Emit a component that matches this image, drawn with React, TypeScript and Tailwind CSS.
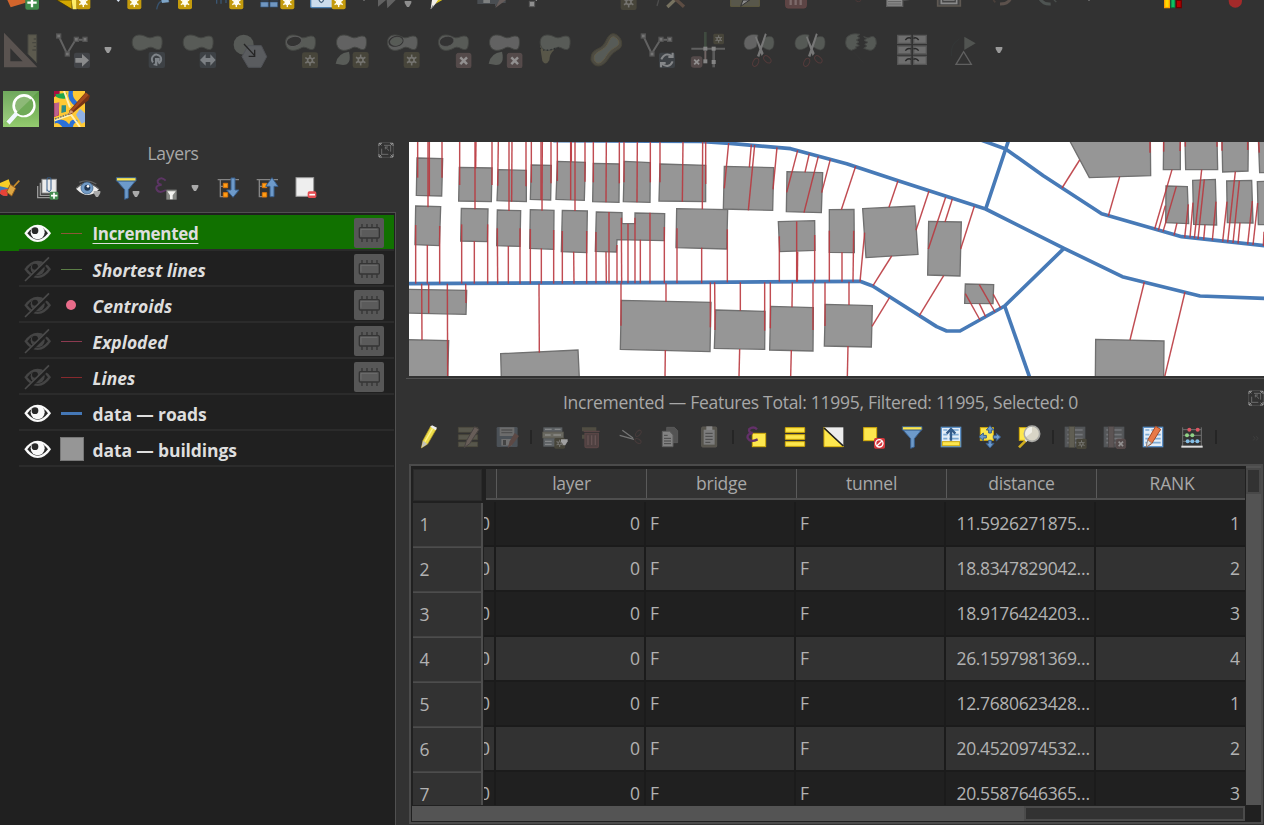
import React from "react";

type Kids = { children?: React.ReactNode };

/* One toolbar slot. Icons are drawn on a grid of three units per pixel. */
function Slot({ x, w, o = 0, top, h, children }: Kids & { x: number; w: number; o?: number; top: number; h: number }) {
  return (
    <svg className="block shrink-0" width={w} height={h} viewBox={`${(x - o) * 3} ${top} ${w * 3} ${h * 3}`}>
      {children}
    </svg>
  );
}

function Gear({ x, y, s = 46, on = false }: { x: number; y: number; s?: number; on?: boolean }) {
  const c = s / 2;
  const r = s * 0.34;
  const col = on ? "#fffdf0" : "#757470";
  return (
    <g transform={`translate(${x} ${y})`}>
      <rect width={s} height={s} rx={s * 0.14} fill={on ? "#c49b0c" : "#47453a"} />
      <g stroke={col} strokeWidth={s * 0.1} fill="none">
        {[0, 60, 120].map((a) => (
          <line key={a} x1={c} y1={c - r} x2={c} y2={c + r} transform={`rotate(${a} ${c} ${c})`} />
        ))}
        <circle cx={c} cy={c} r={s * 0.15} fill={on ? "#fffdf0" : "#47453a"} />
      </g>
    </g>
  );
}

function Cross({ x, y, s = 44 }: { x: number; y: number; s?: number }) {
  return (
    <g transform={`translate(${x} ${y})`}>
      <rect width={s} height={s} rx={6} fill="#544a4a" stroke="#5e5050" strokeWidth={2} />
      <path d={`M${s * 0.27} ${s * 0.27}L${s * 0.73} ${s * 0.73}M${s * 0.73} ${s * 0.27}L${s * 0.27} ${s * 0.73}`} stroke="#929090" strokeWidth={s * 0.17} />
    </g>
  );
}

function Blob({ x = 0, y = 0, fill = "#585b57" }: { x?: number; y?: number; fill?: string }) {
  return (
    <path
      transform={`translate(${x} ${y})`}
      d="M3 32C0 12 12 3 26 4C44 5 48 16 64 11C76 6 88 5 91 14C94 24 92 42 87 46C74 53 66 36 51 42C34 52 9 57 3 32Z"
      fill={fill}
      stroke="#444643"
      strokeWidth={3}
    />
  );
}

const Drop = ({ x, y, c = "#aaaaaa" }: { x: number; y: number; c?: string }) => (
  <path d={`M${x - 10} ${y - 9}h20v6l-7 12h-6l-7-12z`} fill={c} />
);

function TopStrip() {
  return (
    <div className="flex h-2.5 overflow-hidden">
      <Slot x={0} w={48} top={0} h={10}>
        <path d="M22 0h55v8L32 22z" fill="#d3652c" />
        <rect x={76} y={-12} width={41} height={41} rx={6} fill="#3f8a4b" />
        <path d="M96 -6V22M82 8H110" stroke="#fff" strokeWidth={7} />
      </Slot>
      <Slot x={48} w={51} top={0} h={10}>
        <path d="M170 0h46v28z" fill="#d4a800" stroke="#3c3000" strokeWidth={2} />
        <path d="M215 0h15v28h-12z" fill="#ffed68" />
        <Gear x={229} y={-14} s={42} on />
      </Slot>
      <Slot x={99} w={51} top={0} h={10}>
        <path d="M348 -2h14l-7 8z" fill="#d8e4f2" />
        <Gear x={382} y={-14} s={42} on />
      </Slot>
      <Slot x={150} w={51} top={0} h={10}>
        <path d="M470 28C475 2 484 0 508 5" fill="none" stroke="#38536e" strokeWidth={4} />
        <path d="M484 0h22v7l-20 2z" fill="#7ea5c8" />
        <Gear x={534} y={-14} s={42} on />
      </Slot>
      <Slot x={201} w={51} top={0} h={10}>
        <path d="M650 0v11M663 0v11M678 0v9" stroke="#3a5672" strokeWidth={4} />
        <Gear x={688} y={-14} s={42} on />
      </Slot>
      <Slot x={252} w={51} top={0} h={10}>
        <path d="M782 -10h24v10h-24zM811 -10h24v10h-24zM782 6h23v15h-23zM810 6h23v15h-23z" fill="#7097c2" stroke="#35567c" strokeWidth={2} />
        <Gear x={841} y={-14} s={42} on />
      </Slot>
      <Slot x={303} w={54} top={0} h={10}>
        <rect x={932} y={-20} width={70} height={43} rx={4} fill="#cbdcec" stroke="#4d7faf" strokeWidth={4} />
        <path d="M957 0q7 15 14 0" fill="#e8f2fa" stroke="#476480" strokeWidth={4} />
        <Gear x={995} y={-14} s={42} on />
      </Slot>
      <Slot x={357} w={67} top={0} h={10}>
        <rect x={1090} width={4} height={3} fill="#777" />
        <path d="M1134 0h24l-24 20zM1160 0h27l-25 25z" fill="#626262" />
        <Drop x={1224} y={12} c="#8d8d8d" />
      </Slot>
      <Slot x={424} w={46} o={420} top={0} h={10}>
        <path d="M36 0h21L32 28z" fill="#f2efe7" />
        <path d="M54 0h13L47 11z" fill="#d9c21b" />
        <path d="M38 15L31 28l10-9z" fill="#888" />
      </Slot>
      <Slot x={470} w={50} o={420} top={0} h={10}>
        <path d="M172 0h85v9h-22l-10 12V12h-53z" fill="#4a4e52" />
        <path d="M190 0h20v9h-20z" fill="#7e8080" />
        <path d="M238 0h20l-32 24z" fill="#665c5a" />
      </Slot>
      <Slot x={520} w={78} o={420} top={0} h={10}>
        <rect x={328} y={4} width={16} height={16} fill="#8e8e8e" stroke="#555" strokeWidth={3} />
        <path d="M347 0h4v3h-4z" fill="#888" />
      </Slot>
      <Slot x={598} w={50} o={420} top={0} h={10}>
        <Gear x={602} y={-18} s={48} />
      </Slot>
      <Slot x={648} w={70} o={420} top={0} h={10}>
        <path d="M711 18l5-18" stroke="#4d4d4d" strokeWidth={4} />
        <path d="M742 21L768 -4" stroke="#777260" strokeWidth={10} />
        <path d="M765 -4L792 20" stroke="#5d4d43" strokeWidth={10} />
      </Slot>
      <Slot x={718} w={60} o={420} top={0} h={10}>
        <path d="M932 -2h86v21h-86z" fill="#58574b" stroke="#5f5c42" strokeWidth={3} />
        <path d="M969 0h20L962 19z" fill="#8a8a8a" stroke="#333" strokeWidth={3} />
      </Slot>
      <Slot x={778} w={62} o={420} top={0} h={10}>
        <rect x={1097} y={-20} width={62} height={44} rx={7} fill="#5c4545" stroke="#654646" strokeWidth={3} />
        <path d="M1112 0v15M1127 0v15M1142 0v15" stroke="#7d6a6a" strokeWidth={7} />
      </Slot>
      <Slot x={840} w={40} o={840} top={0} h={10}>
        <path d="M46 0q10 10 18 0" stroke="#4c3838" strokeWidth={3} fill="none" />
      </Slot>
      <Slot x={880} w={50} o={840} top={0} h={10}>
        <path d="M140 -5h48v24h-48z" fill="#8d8d8d" stroke="#5e5e5e" strokeWidth={4} />
        <path d="M144 5h40M144 12h40" stroke="#626262" strokeWidth={3} />
        <path d="M190 0h20l-20 3z" fill="#545454" />
      </Slot>
      <Slot x={930} w={50} o={840} top={0} h={10}>
        <path d="M293 -10h68v28h-68z" fill="#444" stroke="#5e5852" strokeWidth={5} />
        <path d="M304 -10h46v20h-46z" fill="none" stroke="#8a8a8a" strokeWidth={5} />
        <path d="M310 0h34v3h-34z" fill="#777" />
      </Slot>
      <Slot x={980} w={160} o={840} top={0} h={10}>
        <path d="M480 12Q504 12 511 -3" stroke="#5c514c" strokeWidth={9} fill="none" />
        <path d="M460 0l6 7" stroke="#4a403b" strokeWidth={5} />
        <path d="M600 -3Q611 14 632 12" stroke="#4e5452" strokeWidth={9} fill="none" />
        <path d="M642 0l7 6" stroke="#4a4f4d" strokeWidth={4} />
        <rect x={745} width={4} height={3} fill="#777" />
      </Slot>
      <Slot x={1140} w={124} o={840} top={0} h={10}>
        <path d="M974 -5h14v28h-14z" fill="#ffd800" stroke="#ff9d00" strokeWidth={4} />
        <path d="M993 -5h12v28h-12z" fill="#0cbf62" stroke="#05783d" strokeWidth={3} />
        <path d="M1009 1h15v22h-15z" fill="#b80000" stroke="#6c0000" strokeWidth={4} />
        <circle cx={1186} cy={3} r={20} fill="#a42a2a" />
      </Slot>
    </div>
  );
}

function Nodes({ x, y }: { x: number; y: number }) {
  return (
    <g transform={`translate(${x} ${y})`} stroke="#626262" strokeWidth={6} fill="none">
      <path d="M8 7L33 60L59 18H84" />
      {[[8, 7], [34, 61], [61, 17], [87, 17]].map(([a, b]) => (
        <rect key={a} x={a - 6} y={b - 6} width={12} height={12} fill="#757575" stroke="#555" strokeWidth={4} />
      ))}
    </g>
  );
}

function Scissor({ x, light }: { x: number; light?: boolean }) {
  return (
    <g transform={`translate(${x} 0)`}>
      <path d="M43 105C18 99 1 111 1 131C3 157 28 149 39 139Z" fill={light ? "#636363" : "#555955"} stroke="#454745" strokeWidth={2} />
      <path d="M62 113Q91 102 91 125Q92 147 77 150Q65 148 54 139Z" fill="#555955" stroke="#454745" strokeWidth={2} />
      <path d="M64 100L69 103 47 171 40 168zM34 111L38 109 60 160 54 168z" fill="#777" />
      <ellipse cx={36} cy={187} rx={8} ry={13} transform="rotate(25 36 187)" fill="none" stroke="#533a3a" strokeWidth={3} />
      <ellipse cx={71} cy={178} rx={8} ry={13} transform="rotate(-47 71 178)" fill="none" stroke="#533a3a" strokeWidth={3} />
    </g>
  );
}

function DigitizeBar() {
  const p = { top: 96, h: 36 };
  return (
    <div className="mt-[22px] flex h-9">
      <Slot x={0} w={48} {...p}>
        <path d="M84 104h26v84l-26-26z" fill="#5c5a4e" stroke="#484842" strokeWidth={3} />
        <path d="M101 117h8M97 128h12M101 139h8M97 150h12" stroke="#474740" strokeWidth={4} />
        <path fillRule="evenodd" d="M12 98L112 202H12zM31 145V184H68z" fill="#5a5350" />
      </Slot>
      <Slot x={48} w={51} {...p}>
        <Nodes x={168} y={101} />
        <rect x={222} y={158} width={48} height={46} rx={6} fill="#414347" />
        <path d="M226 174h20v-12l21 19-21 19v-12h-20z" fill="#8a8b8c" />
      </Slot>
      <Slot x={99} w={28} {...p}><Drop x={324} y={150} c="#9b9b9b" /></Slot>
      <Slot x={127} w={51} {...p}>
        <Blob x={394} y={101} />
        <rect x={446} y={156} width={49} height={48} rx={6} fill="#3d4145" />
        <path d="M459 187A14 14 0 1 1 478 189L471 177" fill="none" stroke="#80858a" strokeWidth={6} />
        <path d="M465 174h14v10h-7v14l-13-3 6-5z" fill="#80858a" />
      </Slot>
      <Slot x={178} w={51} {...p}>
        <Blob x={547} y={101} />
        <rect x={599} y={156} width={49} height={48} rx={6} fill="#3d4145" />
        <path d="M600 180l17-17v11h14v-11l16 17-16 17v-11h-14v11z" fill="#7c8084" />
      </Slot>
      <Slot x={229} w={50} {...p}>
        <circle cx={731} cy={134} r={30} fill="#575a57" />
        <path d="M744 137h40l16 33-17 32h-38l-19-32z" fill="#5a5c5f" stroke="#505257" strokeWidth={3} />
        <path d="M732 132L764 167M764 149V169H746" stroke="#252525" strokeWidth={4} fill="none" />
      </Slot>
      <Slot x={279} w={51} {...p}>
        <Blob x={854} y={101} />
        <ellipse cx={882} cy={124} rx={23} ry={15} transform="rotate(-12 882 124)" fill="#333" stroke="#5c5c5c" strokeWidth={3} />
        <Gear x={906} y={157} s={48} />
      </Slot>
      <Slot x={330} w={51} {...p}>
        <Blob x={1007} y={101} fill="#626262" />
        <path d="M1007 191Q1012 159 1047 155Q1056 194 1029 195Z" fill="#595c58" />
        <Gear x={1058} y={156} s={48} />
      </Slot>
      <Slot x={381} w={48} {...p}>
        <Blob x={1160} y={101} fill="#5e5f5e" />
        <ellipse cx={1188} cy={124} rx={23} ry={16} transform="rotate(-12 1188 124)" fill="#333" />
        <ellipse cx={1189} cy={124} rx={18} ry={12} transform="rotate(-12 1189 124)" fill="#575b56" stroke="#606260" strokeWidth={2} />
        <Gear x={1211} y={156} s={48} />
      </Slot>
      <Slot x={429} w={53} o={420} {...p}>
        <Blob x={53} y={101} />
        <ellipse cx={80} cy={124} rx={22} ry={15} transform="rotate(-12 80 124)" fill="#333" stroke="#5c5c5c" strokeWidth={2} />
        <Cross x={109} y={160} />
      </Slot>
      <Slot x={482} w={51} o={420} {...p}>
        <Blob x={206} y={101} fill="#626262" />
        <path d="M206 191Q211 159 246 155Q255 194 228 195Z" fill="#595c58" />
        <Cross x={262} y={160} />
      </Slot>
      <Slot x={533} w={51} o={420} {...p}>
        <path d="M360 138L403 149Q388 162 388 181Q378 199 367 183Z" fill="#585648" />
        <Blob x={358} y={101} />
        <path d="M360 144Q375 157 405 145L421 143" stroke="#2c3030" strokeDasharray="4 7" strokeWidth={4} fill="none" />
      </Slot>
      <Slot x={584} w={51} o={420} {...p}>
        <path d="M513 180C512 146 535 151 548 137C560 125 562 101 581 101C602 105 612 132 600 145C583 156 577 159 564 178C548 203 522 205 513 180Z" fill="#4d4b42" stroke="#464438" strokeWidth={3} />
        <path d="M523 179C519 158 540 155 553 144C567 134 568 110 581 110C600 119 600 133 590 139C573 149 568 154 557 170C545 191 530 196 523 179Z" fill="#575b57" stroke="#625c48" strokeWidth={3} />
      </Slot>
      <Slot x={635} w={51} o={420} {...p}>
        <Nodes x={662} y={101} />
        <rect x={717} y={158} width={48} height={46} rx={6} fill="#3d4145" />
        <path d="M724 178Q735 155 756 168M758 158V171H745M758 184Q747 207 726 192M723 202V189H737" stroke="#858789" strokeWidth={6} fill="none" />
      </Slot>
      <Slot x={686} w={53} o={420} {...p}>
        <path d="M814 146H915" stroke="#606060" strokeWidth={6} />
        <path d="M856 96V143" stroke="#404b40" strokeWidth={8} />
        <path d="M856 153V183" stroke="#6f6463" strokeWidth={6} />
        <path d="M881 142V202" stroke="#5b5b5b" strokeWidth={8} />
        <g fill="#858585"><rect x={850} y={140} width={12} height={12} /><rect x={875} y={140} width={12} height={12} /><rect x={850} y={178} width={12} height={12} /><rect x={875} y={180} width={12} height={12} /></g>
        <Gear x={880} y={101} s={32} />
        <Cross x={814} y={170} s={32} />
      </Slot>
      <Slot x={739} w={51} o={420} {...p}><Scissor x={971} light /></Slot>
      <Slot x={790} w={50} o={420} {...p}><Scissor x={1124} /></Slot>
      <Slot x={840} w={51} o={840} {...p}>
        <path d="M60 103Q31 97 19 114Q11 144 34 151L49 145 47 140 58 137 49 131 57 126 49 120 59 114 52 109Z" fill="#555955" stroke="#454745" strokeWidth={3} />
        <path d="M71 110L84 114Q109 99 109 131Q102 155 86 150L71 145 81 138 74 133 84 127 72 121 80 116z" fill="#555955" stroke="#454745" strokeWidth={3} />
        <path d="M40 155L70 187" stroke="#373737" strokeWidth={2} />
      </Slot>
      <Slot x={891} w={50} o={840} {...p}>
        {[105, 137, 168].map((y) => (
          <g key={y}>
            <path d={`M173 ${y + 1}h39v24h-39zM221 ${y + 1}h38v24h-38z`} fill="#6e6e6e" stroke="#565656" strokeWidth={4} />
            <path d={`M196 ${y + 15}Q204 ${y + 5} 213 ${y + 10}M220 ${y + 10}Q229 ${y + 5} 236 ${y + 15}`} fill="none" stroke="#292929" strokeWidth={4} />
          </g>
        ))}
      </Slot>
      <Slot x={941} w={45} o={840} {...p}>
        <path d="M373 110V150L407 130Z" fill="#515451" />
        <path d="M371 155L348 193H394Z" fill="none" stroke="#606060" strokeWidth={4} />
        <path d="M335 168Q329 134 358 117" fill="none" stroke="#353939" strokeWidth={2} />
      </Slot>
      <Slot x={986} w={30} o={840} {...p}><Drop x={477} y={150} c="#999" /></Slot>
    </div>
  );
}

function PluginBar() {
  return (
    <div className="mt-[23px] flex h-9 gap-[15px] pl-[3px]">
      <svg width="36" height="36" viewBox="9 273 108 108">
        <defs>
          <linearGradient id="leaf" x1="0" y1="0" x2="0" y2="1"><stop stopColor="#5a9b45" /><stop offset="1" stopColor="#95cb70" /></linearGradient>
        </defs>
        <rect x={9} y={273} width={108} height={108} fill="url(#leaf)" />
        <path d="M9 273H117L9 370Z" fill="#fff" opacity={0.13} />
        <circle cx={72} cy={317} r={31} fill="#8db977" stroke="#fff" strokeWidth={8} />
        <path d="M94 296L50 338Q69 354 88 339Q109 317 94 296" fill="#70aa58" />
        <path d="M50 340L24 369" stroke="#f1f8ff" strokeWidth={13} />
      </svg>
      <svg width="36" height="36" viewBox="162 273 108 108">
        <path d="M162 273h93v108h-93z" fill="#ffc934" />
        <path d="M162 273h17v8l-17 11zM162 310h15v36l-15 5z" fill="#a90d40" />
        <path d="M166 283l34-5-4 18q-17 2-27-5z" fill="#1fa74c" />
        <path d="M206 273h13q-4 18 12 32l8 8-8 9q-32-19-25-49zM187 381q-13-16-23-10v-9q32-12 48 19zM207 381q1-28 25-21v8q-12-1-13 13z" fill="#2a70d8" />
        <path d="M228 344l12-18 15 14v26l-10 5z" fill="#91b2e4" />
        <path d="M163 310l15-3-2 38-13 6z" fill="#ba638d" />
        <path d="M185 316h13v19l-14 4z" fill="#308b84" />
        <path d="M164 361L213 344L240 381M192 273L210 322" stroke="#fff0b2" strokeWidth={6} fill="none" />
        <path d="M165 357L207 342" stroke="#667078" strokeWidth={4} strokeDasharray="5 3" />
        <path d="M257 277l13 10-5 14-50 41-9 2 3-13z" fill="#773315" />
        <path d="M258 278l8 7-48 48-6-3z" fill="#a34a1e" />
        <path d="M212 329l9 8-16 7z" fill="#d89b6d" />
      </svg>
    </div>
  );
}

function FloatIcon() {
  return (
    <svg width="16" height="16" viewBox="0 0 48 48" fill="none" stroke="#777" strokeWidth="2.5">
      <rect x="2" y="2" width="44" height="44" rx="6" stroke="#4c4c4c" strokeWidth="3" />
      <path d="M3 12V4H12M36 4H45V12M45 36V45H36M12 45H3V36M3 3L10 10M45 3L38 10M3 45L10 38M45 45L38 38" stroke="#a0a0a0" />
      <path d="M11 20V37H31M18 10H38V29M22 15L33 26M22 22V15H30" />
    </svg>
  );
}

function Funnel({ x, y }: { x: number; y: number }) {
  return (
    <g transform={`translate(${x} ${y})`}>
      <path d="M1 11H58L36 38V63L25 67V38Z" fill="#6d9aca" stroke="#385e8c" strokeWidth={3} />
      <path d="M0 2H59V12H0Z" fill="#fde74e" stroke="#385e8c" strokeWidth={3} />
    </g>
  );
}

function LayersBar() {
  const p = { top: 126, h: 24 };
  return (
    <div className="flex h-6">
      <Slot x={0} w={31} {...p}>
        <path d="M0 144L26 133 34 157 0 163Z" fill="#f7ce26" />
        <path d="M0 154L27 160 18 183Q5 184 0 172Z" fill="#3d78b8" />
        <path d="M2 166L25 161 22 183Q6 185 0 175z" fill="#e84237" />
        <path d="M58 137L40 156" stroke="#c88d29" strokeWidth={5} />
        <path d="M31 148L47 160 35 183 20 171z" fill="#dda642" stroke="#97601c" strokeWidth={3} />
      </Slot>
      <Slot x={31} w={38} {...p}>
        <path d="M113 153V188H157V180M121 143V181H166" fill="none" stroke="#999" strokeWidth={4} />
        <rect x={126} y={133} width={43} height={41} fill="#ececec" stroke="#999" strokeWidth={3} />
        <path d="M141 169V132Q147 118 153 132V163Q147 177 142 164" stroke="#365f8c" strokeWidth={3} fill="none" />
        <rect x={149} y={170} width={26} height={24} rx={4} fill="#438b50" />
        <path d="M162 173V191M153 182H172" stroke="#fff" strokeWidth={5} />
      </Slot>
      <Slot x={69} w={40} {...p}>
        <path d="M228 161Q258 128 297 163Q264 198 228 161Z" fill="#ededed" />
        <path d="M229 160Q259 129 297 162M238 142Q262 131 289 147" stroke="#606060" strokeWidth={4} fill="none" />
        <circle cx={261} cy={159} r={18} fill="#729bc6" stroke="#385b80" strokeWidth={2} />
        <circle cx={262} cy={158} r={9} fill="#223854" /><circle cx={264} cy={154} r={4} fill="white" />
        <Drop x={291} y={177} />
      </Slot>
      <Slot x={109} w={42} {...p}><Funnel x={349} y={126} /><Drop x={408} y={177} /></Slot>
      <Slot x={151} w={30} {...p}>
        <path d="M497 137Q483 123 473 137Q472 148 485 149Q467 151 469 161Q475 178 498 165" stroke="#5c3564" strokeWidth={6} fill="none" />
        <rect x={499} y={164} width={31} height={30} fill="#858783" />
        <path d="M502 169h25l-9 12v12h-8v-12z" fill="#f3f3f0" />
      </Slot>
      <Slot x={181} w={29} {...p}><Drop x={585} y={159} c="#aaa" /></Slot>
      {[0, 1].map((up) => (
        <Slot key={up} x={210 + up * 39} w={39} {...p}>
          <g transform={`translate(${up * 117} 0)`}>
            <path d="M653 134H717M661 134V185H672M661 154H672" stroke="#858585" strokeWidth={4} fill="none" />
            <path d="M670 145h13v13h-13zM670 173h13v13h-13z" fill="#ff9d16" stroke="#db760b" strokeWidth={3} />
            <path d={up ? "M693 185h12v-31h12l-18-26-19 26h13z" : "M693 129h12v36h12l-18 22-19-22h13z"} fill="#6d9aca" stroke="#385e8c" strokeWidth={3} />
          </g>
        </Slot>
      ))}
      <Slot x={288} w={45} {...p}>
        <rect x={888} y={128} width={53} height={56} fill="#eee" stroke="#999" strokeWidth={3} />
        <rect x={923} y={169} width={26} height={20} rx={5} fill="#e54d52" />
        <path d="M928 179H945" stroke="#fff" strokeWidth={5} />
      </Slot>
    </div>
  );
}

function Eye({ off }: { off?: boolean }) {
  const c = off ? "#454545" : "#fafafa";
  return (
    <svg className="shrink-0" width="28" height="28" viewBox="0 0 84 84">
      <path d="M1 43Q18 17 41 17Q64 17 81 43Q64 69 41 69Q18 69 1 43Z" fill={c} />
      <path d="M10 43Q24 24 41 24Q58 24 72 43Q57 62 41 62Q25 62 10 43Z" fill={off ? "#202020" : "#282828"} />
      <circle cx={41} cy={40} r={21} fill={c} />
      <circle cx={33} cy={35} r={off ? 9 : 10} fill={off ? "#202020" : "#292929"} />
      {off && <path d="M6 81L76 12" stroke="#202020" strokeWidth={12} />}
      {off && <path d="M3 78L75 7" stroke="#4b4b4b" strokeWidth={5} />}
    </svg>
  );
}

function Chip() {
  return (
    <svg className="shrink-0" width="30" height="30" viewBox="0 0 90 90">
      <rect width={90} height={90} rx={6} fill="#575757" />
      <path d="M24 18v12M39 18v12M54 18v12M69 18v12M24 61v11M39 61v11M54 61v11M69 61v11" stroke="#353535" strokeWidth={4} />
      <rect x={16} y={29} width={60} height={31} rx={3} fill="#5b5b5b" stroke="#343434" strokeWidth={4} />
      <path d="M21 53V34H70" fill="none" stroke="#777" strokeWidth={2} />
    </svg>
  );
}

const layers = [
  { name: "Incremented", kind: "line", color: "#8c5738", temp: true, on: true },
  { name: "Shortest lines", kind: "line", color: "#5b7e46", temp: true, on: false },
  { name: "Centroids", kind: "dot", color: "#e96c8a", temp: true, on: false },
  { name: "Exploded", kind: "line", color: "#8c3a50", temp: true, on: false },
  { name: "Lines", kind: "line", color: "#87292d", temp: true, on: false },
  { name: "data — roads", kind: "road", color: "#4477b6", temp: false, on: true },
  { name: "data — buildings", kind: "fill", color: "#969696", temp: false, on: true },
];

function LayerPanel() {
  return (
    <section className="flex w-[396px] shrink-0 flex-col">
      <header className="flex h-[42px] items-center pb-1.5 text-[17.5px] text-[#a8a8a8]">
        <h2 className="w-[346px] text-center leading-6 tracking-[-0.3px]">Layers</h2>
        <span className="-mt-[7px] ml-8"><FloatIcon /></span>
      </header>
      <LayersBar />
      <div className="mt-[11px] flex-1 overflow-hidden border-t border-r border-[#505050] bg-[#202020] pt-0.5 pr-px">
        {layers.map((l, i) => (
          <div key={l.name} className={i === 0 ? "bg-[#117100]" : ""}>
            <div className="ml-[19px] flex h-9 items-center border-b-2 border-[#2b2b2b] pt-0.5 pl-[5px]">
              <Eye off={!l.on} />
              <span className="ml-[7px] flex w-6 shrink-0 items-center justify-center">
                {l.kind === "line" && <i className="mt-px block h-px w-[21px]" style={{ background: l.color }} />}
                {l.kind === "road" && <i className="mt-px block h-[3px] w-[21px] bg-[#4477b6]" />}
                {l.kind === "dot" && <i className="block size-[10px] rounded-full bg-[#e96c8a]" />}
                {l.kind === "fill" && <i className="ml-px block size-6 shrink-0 border border-[#777] bg-[#969696]" />}
              </span>
              <span
                className={
                  "mt-[2px] ml-[9.5px] flex-1 whitespace-nowrap leading-6 font-bold text-[#dedede] " +
                  (i === 0 ? "text-[17px] tracking-[-0.32px] underline decoration-1 underline-offset-[3px]" : l.temp ? "text-[17.5px] italic" : "text-[17.5px] tracking-[-0.12px]")
                }
              >
                {l.name}
              </span>
              {l.temp && <span className="mr-[10px]"><Chip /></span>}
            </div>
          </div>
        ))}
      </div>
    </section>
  );
}

/* Map geometry, in three tiles that share one scale. */
const tiles: { dx: number; shapes: string[]; roads: string[]; rays: number[][] }[] = [
  {
    dx: -4,
    shapes: [
      "36,69 113,71 110,183 34,181", "32,213 107,215 103,332 30,329", "163,97 261,99 259,200 161,198", "169,220 249,222 247,320 167,318",
      "280,104 364,106 364,200 276,197", "277,225 347,227 345,334 275,332", "379,90 439,91 437,195 376,193", "376,224 447,226 446,343 374,340",
      "457,79 541,82 538,196 453,193", "472,226 547,228 545,353 469,350", "565,85 643,87 642,202 563,200",
      "574,231 651,233 651,266 690,266 690,234 779,236 778,317 636,314 634,351 571,349", "658,79 736,83 735,202 655,200",
      "765,87 902,91 902,200 762,198", "815,221 968,224 965,342 813,338", "0,463 185,466 183,538 0,534", "0,614 131,617 128,730 0,730",
      "287,656 519,645 523,730 289,730", "649,496 918,502 915,650 646,643",
    ],
    roads: ["0,446 885,442"],
    rays: [
      [38, 19, 38, 128], [69, 19, 69, 217], [73, 19, 73, 183], [111, 19, 111, 128], [32, 270, 32, 446], [67, 330, 67, 446], [104, 273, 104, 446],
      [164, 19, 164, 150], [210, 19, 210, 223], [213, 19, 212, 100], [261, 19, 261, 150], [170, 268, 170, 446], [208, 318, 208, 446], [248, 268, 248, 446],
      [280, 19, 278, 152], [312, 19, 312, 228], [321, 19, 320, 200], [363, 19, 363, 154], [277, 280, 278, 446], [310, 333, 310, 446], [345, 280, 345, 446],
      [379, 19, 379, 143], [408, 19, 408, 195], [412, 19, 411, 227], [438, 19, 438, 145], [376, 282, 376, 446], [409, 340, 409, 446], [446, 285, 446, 446],
      [457, 19, 457, 138], [497, 19, 497, 195], [499, 19, 499, 80], [510, 19, 510, 228], [540, 19, 540, 140], [472, 288, 472, 446], [506, 350, 507, 446], [545, 288, 545, 446],
      [565, 19, 565, 142], [604, 19, 603, 202], [643, 19, 643, 145], [573, 291, 573, 445], [603, 350, 604, 445], [612, 231, 612, 445], [636, 330, 636, 445],
      [649, 248, 650, 445], [669, 266, 669, 445], [690, 248, 690, 445], [706, 314, 706, 445], [735, 233, 735, 445], [778, 276, 778, 445],
      [657, 19, 657, 142], [697, 19, 696, 202], [736, 19, 736, 142], [765, 19, 765, 142], [834, 19, 832, 200], [893, 19, 892, 223], [902, 19, 902, 147],
      [816, 280, 816, 445], [890, 338, 890, 445], [50, 446, 51, 615], [71, 446, 71, 535], [127, 446, 128, 725], [182, 446, 183, 504],
      [402, 446, 403, 653], [648, 445, 648, 572], [783, 445, 783, 500], [781, 645, 780, 725],
    ],
  },
  {
    dx: 291,
    shapes: [
      "73,94 221,98 218,226 70,222", "261,110 368,113 364,233 259,230", "235,260 344,257 345,346 239,350", "388,224 462,223 463,353 388,352",
      "488,221 644,213 654,358 498,368", "686,259 784,261 780,423 683,420", "796,447 881,449 879,506 794,505", "47,525 195,529 194,643 43,640",
      "212,514 340,518 339,648 209,645", "376,508 517,512 514,636 373,633",
    ],
    roads: ["-440,17 0,19 90,25 272,41 440,86 590,136 857,222 1092,340 1267,425 1500,483 1720,491", "0,442 480,439 518,453 710,575 740,588 780,588 914,513 1092,340"],
    rays: [
      [82, 283, 82, 442], [86, 24, 73, 160], [154, 29, 148, 97], [164, 30, 145, 226], [231, 37, 219, 163], [293, 46, 260, 172], [328, 56, 315, 112],
      [355, 64, 312, 233], [391, 73, 365, 173], [467, 94, 424, 224], [594, 137, 567, 217], [687, 168, 648, 286], [737, 187, 685, 342], [757, 192, 735, 261],
      [823, 214, 782, 342], [238, 304, 238, 440], [290, 259, 290, 440], [293, 350, 292, 440], [344, 300, 344, 440], [388, 287, 388, 440], [426, 352, 426, 440],
      [461, 287, 459, 440], [494, 293, 480, 440], [575, 363, 519, 452], [731, 422, 658, 542], [569, 487, 516, 574], [796, 476, 840, 555], [838, 506, 857, 545],
      [838, 449, 885, 531], [880, 478, 902, 519], [31, 442, 31, 577], [44, 442, 45, 585], [121, 442, 121, 527], [194, 442, 194, 587], [211, 442, 211, 580],
      [277, 442, 276, 517], [339, 442, 339, 585], [375, 442, 375, 573], [447, 440, 447, 510], [119, 642, 117, 725], [274, 645, 272, 725], [444, 633, 442, 725],
    ],
  },
  {
    dx: 581,
    shapes: [
      "240,19 298,128 482,122 481,10", "521,10 520,104 571,104 571,10", "585,10 587,104 683,104 681,10", "696,10 698,111 774,108 775,10",
      "805,10 809,113 840,113 840,10", "528,153 592,155 596,266 527,263", "608,136 676,133 680,270 611,268", "710,138 785,136 789,264 712,263",
      "802,140 840,138 840,269 805,269", "317,613 522,618 521,730 316,730",
    ],
    roads: ["-30,14 0,25 47,42 160,122 335,236 575,305 830,333", "57,12 47,42 -13,222", "44,513 120,730"],
    rays: [
      [269, 75, 216, 159], [389, 125, 355, 243], [480, 19, 480, 53], [521, 19, 521, 50], [571, 19, 570, 48], [586, 19, 586, 35], [681, 19, 681, 35],
      [696, 19, 696, 47], [773, 19, 773, 45], [806, 19, 808, 53], [546, 104, 494, 282], [526, 212, 505, 286], [559, 154, 519, 290], [561, 264, 552, 301],
      [595, 208, 584, 308], [609, 203, 600, 308], [635, 104, 613, 310], [643, 133, 624, 312], [645, 269, 641, 314], [678, 200, 667, 316], [711, 200, 698, 320],
      [736, 110, 713, 322], [748, 138, 729, 324], [750, 263, 744, 326], [787, 198, 773, 328], [803, 204, 789, 330], [822, 290, 820, 333],
      [463, 441, 420, 615], [585, 471, 524, 725],
    ],
  },
];

function MapCanvas() {
  return (
    <svg className="ml-[3px] block bg-white" width="855" height="234" viewBox="0 0 855 234">
      {tiles.map((t) => (
        <g key={t.dx} transform={`translate(${t.dx} -7) scale(.33333)`} fill="#969696" stroke="#707070" strokeWidth={4}>
          {t.shapes.map((s) => <polygon key={s} points={s} />)}
        </g>
      ))}
      {tiles.map((t) => (
        <g key={t.dx} transform={`translate(${t.dx} -7) scale(.33333)`} fill="none" stroke="#477ab7" strokeWidth={11} strokeLinejoin="round">
          {t.roads.map((s) => <polyline key={s} points={s} />)}
        </g>
      ))}
      {tiles.map((t) => (
        <g key={t.dx} transform={`translate(${t.dx} -7) scale(.33333)`} stroke="#b9383f" strokeOpacity={0.9} strokeWidth={4.3}>
          {t.rays.map((r, i) => <line key={i} x1={r[0]} y1={r[1]} x2={r[2]} y2={r[3]} />)}
        </g>
      ))}
    </svg>
  );
}

function Sheet({ x, lit }: { x: number; lit?: boolean }) {
  return (
    <g>
      <rect x={x} y={142} width={58} height={58} fill={lit ? "#e4eef8" : "#555759"} stroke={lit ? "#5c91c8" : "#515457"} strokeWidth={4} />
      <path d={`M${x + 6} 150h12M${x + 24} 150h28M${x + 6} 164h12M${x + 24} 164h28M${x + 6} 176h12M${x + 24} 176h28M${x + 6} 188h12M${x + 24} 188h28`} stroke={lit ? "#7eaad4" : "#737579"} strokeWidth={5} />
    </g>
  );
}

function TableBar() {
  const a = { o: 405, top: 135, h: 24 };
  const b = { o: 835, top: 135, h: 24 };
  return (
    <div className="flex h-6 pl-1">
      <Slot x={410} w={38} {...a}>
        <path d="M49 204L54 181 77 139 94 147 68 192z" fill="#ecdc48" stroke="#b49925" strokeWidth={2} />
        <path d="M49 204L54 182 67 192z" fill="#c4c3b8" /><path d="M76 140l5-4 15 7-4 8z" fill="#ededed" /><path d="M60 185L83 145" stroke="#fff38c" strokeWidth={4} />
      </Slot>
      <Slot x={448} w={39} {...a}>
        <path d="M160 142h58v15h-58zM160 164h58v15h-58zM160 186h58v14h-58z" fill="#58574c" stroke="#4b493b" strokeWidth={2} />
        <path d="M178 203l6-20 25-43 13 8-28 43z" fill="#675d58" stroke="#484341" strokeWidth={3} />
      </Slot>
      <Slot x={487} w={39} {...a}>
        <rect x={275} y={141} width={63} height={60} rx={4} fill="#4b5157" />
        <rect x={284} y={142} width={44} height={26} fill="#6c6c6c" /><path d="M289 150h33M289 158h33" stroke="#505050" strokeWidth={4} />
        <rect x={289} y={177} width={31} height={20} fill="#707070" /><path d="M294 180h9v15h-9z" fill="#444" />
        <path d="M308 204l6-20 15-25 13 9-21 27z" fill="#5c4945" />
      </Slot>
      <Slot x={526} w={9} {...a}><rect x={375} y={150} width={6} height={42} fill="#252525" /></Slot>
      <Slot x={535} w={37} {...a}>
        <rect x={415} y={142} width={57} height={58} fill="#5c6063" />
        <path d="M420 148h20M449 148h18M420 184h20M449 184h18M420 193h20" stroke="#848688" strokeWidth={4} />
        <rect x={413} y={156} width={63} height={18} fill="#696860" stroke="#53524a" strokeWidth={2} />
        <path d="M420 165h17M445 165h23" stroke="#8b8b87" strokeWidth={4} />
        <Gear x={448} y={174} s={32} /><Drop x={478} y={187} c="#a0a0a0" />
      </Slot>
      <Slot x={572} w={38} {...a}>
        <path d="M531 142h43v12h-43zM531 164h30v12h-30z" fill="#504d42" />
        <path d="M540 160h40v39q0 4-5 4h-30q-5 0-5-4zM536 154h48" fill="#4f4141" stroke="#594545" strokeWidth={4} />
        <path d="M549 166v29M560 166v29M571 166v29" stroke="#665353" strokeWidth={4} />
      </Slot>
      <Slot x={610} w={40} {...a}>
        <path d="M644 166L687 178M652 151L684 174" stroke="#757575" strokeWidth={4} /><ellipse cx={700} cy={160} rx={11} ry={6} transform="rotate(-50 700 160)" fill="none" stroke="#463a3a" strokeWidth={3} />
        <ellipse cx={699} cy={183} rx={10} ry={6} transform="rotate(30 699 183)" fill="none" stroke="#463a3a" strokeWidth={3} />
      </Slot>
      <Slot x={650} w={39} {...a}>
        <path d="M785 142h23l10 10v36h-33z" fill="#535353" stroke="#606060" strokeWidth={2} />
        <path d="M772 154h22l10 11v35h-32z" fill="#828282" stroke="#5f5f5f" strokeWidth={3} /><path d="M777 166h11M777 175h21M777 183h21M777 191h21" stroke="#494949" strokeWidth={3} />
      </Slot>
      <Slot x={689} w={39} {...a}>
        <rect x={890} y={141} width={45} height={60} rx={3} fill="#56544c" stroke="#5c5952" strokeWidth={3} />
        <path d="M896 149h33v45h-33z" fill="#7c7c7c" /><path d="M901 160h22M901 169h22M901 178h22M901 187h15" stroke="#484848" strokeWidth={3} /><rect x={904} y={139} width={18} height={11} fill="#888" />
      </Slot>
      <Slot x={728} w={10} {...a}><rect x={981} y={150} width={6} height={42} fill="#252525" /></Slot>
      <Slot x={738} w={37} {...a}>
        <rect x={1042} y={160} width={40} height={40} fill="#fde74e" stroke="#cda90c" strokeWidth={3} />
        <path d="M1056 148Q1046 138 1033 147Q1029 157 1043 159Q1025 162 1028 174Q1036 189 1058 178" stroke="#633169" strokeWidth={7} fill="none" />
      </Slot>
      <Slot x={775} w={40} {...a}><path d="M1141 143h58v14h-58zM1141 164h58v14h-58zM1141 185h58v14h-58z" fill="#fde74e" stroke="#d4ac08" strokeWidth={3} /></Slot>
      <Slot x={815} w={39} {...b}>
        <path d="M-33 142h58v58h-58z" fill="#ececec" /><path d="M-33 142v58h58z" fill="#fde74e" stroke="#d4ac08" strokeWidth={3} /><path d="M-33 144L25 198" stroke="#1f1f1f" strokeWidth={5} />
      </Slot>
      <Slot x={854} w={38} {...b}>
        <rect x={86} y={143} width={39} height={39} fill="#fde74e" stroke="#d4ac08" strokeWidth={3} /><rect x={117} y={174} width={33} height={32} rx={5} fill="#d3383c" />
        <circle cx={133} cy={190} r={11} fill="none" stroke="#fff" strokeWidth={4} /><path d="M126 197l15-14" stroke="#fff" strokeWidth={4} />
      </Slot>
      <Slot x={892} w={39} {...b}><Funnel x={202} y={138} /></Slot>
      <Slot x={931} w={39} {...b}>
        <Sheet x={319} lit /><rect x={322} y={185} width={52} height={12} fill="#fde74e" stroke="#cda90c" strokeWidth={3} />
        <path d="M348 182V148M335 161L348 147L361 161" stroke="#345c8b" strokeWidth={7} fill="none" />
      </Slot>
      <Slot x={970} w={39} {...b}>
        <rect x={436} y={143} width={39} height={38} fill="#fde74e" stroke="#d4ac08" strokeWidth={3} />
        <path d="M465 137l11 13h-7v9h-8v-9h-7zM465 204l12-14h-8v-9h-8v9h-8zM432 170l13-11v7h9v8h-9v8zM497 171l-13-11v7h-9v8h9v8z" fill="#6d9aca" stroke="#385e8c" strokeWidth={3} />
      </Slot>
      <Slot x={1009} w={39} {...b}>
        <rect x={553} y={143} width={32} height={38} fill="#fde74e" stroke="#d4ac08" strokeWidth={3} /><path d="M573 181L552 202" stroke="#d2ae20" strokeWidth={8} /><path d="M580 174l-9 9" stroke="#e2e2e2" strokeWidth={8} />
        <circle cx={591} cy={161} r={23} fill="#d8d5c6" stroke="#a9a9a5" strokeWidth={5} /><path d="M591 141a20 20 0 0 0-18 30l18-14z" fill="#f0efe7" />
      </Slot>
      <Slot x={1048} w={10} {...b}><rect x={651} y={150} width={6} height={42} fill="#252525" /></Slot>
      <Slot x={1058} w={37} {...b}><Sheet x={691} /><rect x={702} y={140} width={17} height={63} fill="#605e53" stroke="#48473e" strokeWidth={2} /><Gear x={724} y={176} s={31} /></Slot>
      <Slot x={1095} w={39} {...b}><Sheet x={808} /><rect x={820} y={140} width={17} height={63} fill="#5c5454" stroke="#464141" strokeWidth={2} /><Cross x={843} y={177} s={29} /></Slot>
      <Slot x={1134} w={39} {...b}>
        <Sheet x={925} lit /><path d="M934 201l5-22 23-40 15 9-27 43z" fill="#e87a49" stroke="#a54823" strokeWidth={3} /><path d="M934 201l4-21 12 9z" fill="#ddd" stroke="#777" strokeWidth={2} />
      </Slot>
      <Slot x={1173} w={39} {...b}>
        <path d="M1043 142V198M1099 142V198M1043 149H1099M1043 166H1099M1043 184H1099" stroke="#707070" strokeWidth={3} /><path d="M1039 200H1103" stroke="#ddd" strokeWidth={6} />
        {[[1063, 149, "#dc5662"], [1088, 149, "#dc5662"], [1056, 166, "#91d287"], [1072, 166, "#91d287"], [1058, 184, "#83bce4"], [1072, 184, "#83bce4"], [1087, 184, "#83bce4"]].map(([x, y, c], i) => (
          <circle key={i} cx={x} cy={y} r={6} fill={String(c)} />
        ))}
      </Slot>
      <Slot x={1212} w={10} {...b}><rect x={1140} y={150} width={6} height={42} fill="#252525" /></Slot>
      <Slot x={1222} w={42} {...b}><path d="M1255 169l5 6-5 6M1264 169l5 6-5 6" stroke="#454545" strokeWidth={2} fill="none" /></Slot>
    </div>
  );
}

const records = [
  ["11.5926271875…", 1], ["18.8347829042…", 2], ["18.9176424203…", 3], ["26.1597981369…", 4],
  ["12.7680623428…", 1], ["20.4520974532…", 2], ["20.5587646365…", 3],
];

function AttributeTable() {
  return (
    <div className="mt-[15px] ml-[3px] flex h-[360px] w-[854px] flex-col border-2 border-[#4b4b4b] bg-[#202020] text-[17.5px] text-[#b2b2b2]">
      <div className="flex h-[339px] shrink-0">
        <div className="flex w-[834px] shrink-0 flex-col overflow-hidden">
          <div className="flex h-[36px] shrink-0 pt-[3px]">
            <div className="mr-[4px] ml-[2px] h-8 w-[69px] shrink-0 border border-[#2a2a2a] bg-[#323232]" />
            <div className="flex h-[31px] flex-1 border-b-2 border-[#4e4e4e] bg-[#323232] text-center leading-[28px] text-[#a8a8a8]">
              <div className="w-[11px] shrink-0 border-r border-[#5a5a5a]" />
              {["layer", "bridge", "tunnel", "distance", "RANK"].map((h, i) => (
                <div key={h} className={"w-[150px] shrink-0 tracking-[-0.25px] " + (i < 4 ? "border-r border-[#5a5a5a]" : "")}>{h}</div>
              ))}
            </div>
          </div>
          {records.map(([d, rank], i) => {
            const cell = "h-[43px] shrink-0 overflow-hidden leading-[43px] " + (i % 2 ? "bg-[#323232]" : "bg-[#202020]");
            return (
              <div key={i} className="flex h-[45px] shrink-0">
                <div className="mt-px mr-[1px] -mb-px ml-[2px] w-[70px] shrink-0 border-r-2 border-b border-[#4d4d4d] bg-[#323232] pl-[6.5px] leading-[43px] shadow-[inset_0_-1px_#444]">{i + 1}</div>
                <div className="flex flex-1 gap-[2px] bg-[#1b1b1b] pb-[2px]">
                  <div className={cell + " flex w-[10px] justify-end pr-[4px]"}>0</div>
                  <div className={cell + " w-[148px] pr-[4px] text-right"}>0</div>
                  <div className={cell + " w-[148px] pl-[4px]"}>F</div>
                  <div className={cell + " w-[148px] pl-[4px]"}>F</div>
                  <div className={cell + " w-[148px] pl-[10.5px] tracking-[-0.35px]"}>{d}</div>
                  <div className={cell + " w-[149px] pr-[5px] text-right"}>{rank}</div>
                </div>
              </div>
            );
          })}
        </div>
        <div className="ml-px w-[15px] shrink-0 bg-[#535353] pt-[1px]">
          <div className="mt-px h-[26px] border-2 border-[#484848] bg-[#323232]" />
        </div>
      </div>
      <div className="mt-px ml-px flex h-[15px]">
        <div className="w-[612px] shrink-0 bg-[#545454]" />
        <div className="w-[221px] shrink-0 border-2 border-[#4b4b4b] bg-[#323232]" />
      </div>
    </div>
  );
}

export default function App() {
  return (
    <main className="flex h-[825px] w-[1264px] flex-col overflow-hidden bg-[#323232] font-['Open_Sans','Noto_Sans',sans-serif]">
      <TopStrip />
      <DigitizeBar />
      <PluginBar />
      <div className="mt-2 flex min-h-0 flex-1">
        <LayerPanel />
        <section className="ml-2.5 flex w-[858px] shrink-0 flex-col pt-[7px]">
          <MapCanvas />
          <div className="mt-0.5 h-px bg-[#505050]" />
          <header className="flex h-[46px] items-center text-[17.5px] text-[#a8a8a8]">
            <h2 className="w-[842px] pr-[13px] text-center whitespace-nowrap tracking-[-0.28px]">Incremented — Features Total: 11995, Filtered: 11995, Selected: 0</h2>
            <span className="-mt-[8px]"><FloatIcon /></span>
          </header>
          <TableBar />
          <AttributeTable />
        </section>
      </div>
    </main>
  );
}
